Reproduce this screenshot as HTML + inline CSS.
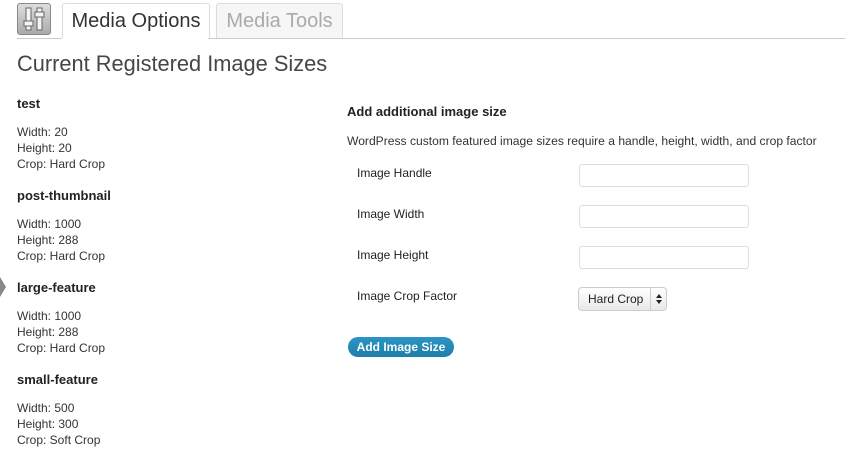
<!DOCTYPE html>
<html><head><style>
body{margin:0;width:845px;height:472px;background:#fff;font-family:"Liberation Sans",sans-serif;color:#333;position:relative;overflow:hidden}
.a{position:absolute;white-space:nowrap}
.tab{position:absolute;top:3px;height:35px;border:1px solid #ddd;border-bottom:none;border-radius:3px 3px 0 0;font-size:20px;line-height:34px;text-align:center;box-sizing:border-box}
.h{font-weight:bold;font-size:13px;color:#222}
.s{font-size:12px;line-height:16px;color:#333}
.l{font-size:12px;color:#222;left:357px}
.in{position:absolute;left:579px;width:170px;height:23px;border:1px solid #ddd;border-radius:3px;box-sizing:border-box;background:#fff}
</style></head><body>
<div class="a" style="left:17px;top:3px;width:34px;height:32px;border:1px solid #888;border-radius:3px;background:linear-gradient(#ddd,#aaa);box-sizing:border-box">
<svg width="32" height="30" viewBox="0 0 32 30"><g fill="#f4f4f4" stroke="#666" stroke-width="1"><rect x="8" y="4" width="5" height="22"/><rect x="19" y="4" width="5" height="22"/><rect x="6" y="17" width="9" height="5"/><rect x="17" y="8" width="9" height="5"/></g></svg></div>
<div class="tab" style="left:62px;width:148px;background:#fff;color:#333;height:36px">Media Options</div>
<div class="tab" style="left:216px;width:127px;background:#f6f6f6;color:#aaa">Media Tools</div>
<div class="a" style="left:17px;right:0;top:38px;height:1px;background:#ccc"></div>
<div class="a" style="left:62px;top:38px;width:146px;height:1px;background:#fff"></div>
<div class="a" style="left:17px;top:51px;font-size:21.8px;color:#464646">Current Registered Image Sizes</div>
<div class="a" style="left:0;top:277px;width:0;height:0;border-top:10px solid transparent;border-bottom:10px solid transparent;border-left:6px solid #888"></div>

<div class="a h" style="left:17px;top:96px">test</div>
<div class="a s" style="left:17px;top:124px">Width: 20<br>Height: 20<br>Crop: Hard Crop</div>
<div class="a h" style="left:17px;top:188px">post-thumbnail</div>
<div class="a s" style="left:17px;top:216px">Width: 1000<br>Height: 288<br>Crop: Hard Crop</div>
<div class="a h" style="left:17px;top:280px">large-feature</div>
<div class="a s" style="left:17px;top:308px">Width: 1000<br>Height: 288<br>Crop: Hard Crop</div>
<div class="a h" style="left:17px;top:372px">small-feature</div>
<div class="a s" style="left:17px;top:400px">Width: 500<br>Height: 300<br>Crop: Soft Crop</div>

<div class="a h" style="left:347px;top:104px">Add additional image size</div>
<div class="a" style="left:347px;top:134px;font-size:12.1px;color:#333">WordPress custom featured image sizes require a handle, height, width, and crop factor</div>
<div class="a l" style="top:166px">Image Handle</div><div class="in" style="top:164px"></div>
<div class="a l" style="top:207px">Image Width</div><div class="in" style="top:205px"></div>
<div class="a l" style="top:248px">Image Height</div><div class="in" style="top:246px"></div>
<div class="a l" style="top:289px">Image Crop Factor</div>
<div class="a" style="left:578px;top:287px;width:89px;height:24px;border:1px solid #ccc;border-radius:4px;box-sizing:border-box;background:linear-gradient(#fff,#e8e8e8);font-size:12px;line-height:22px;padding-left:9px;color:#222">Hard Crop<span style="position:absolute;left:71px;top:0;width:16px;height:22px;border-left:1px solid #ccc"><svg width="16" height="22" viewBox="0 0 16 22"><path d="M5 10 L8 6 L11 10Z M5 12 L8 16 L11 12Z" fill="#222"/></svg></span></div>
<div class="a" style="left:348px;top:337px;width:106px;height:20px;border-radius:10px;background:linear-gradient(#2a95c5,#1e7ea8);color:#fff;font-weight:bold;font-size:12px;line-height:20px;text-align:center">Add Image Size</div>
</body></html>
